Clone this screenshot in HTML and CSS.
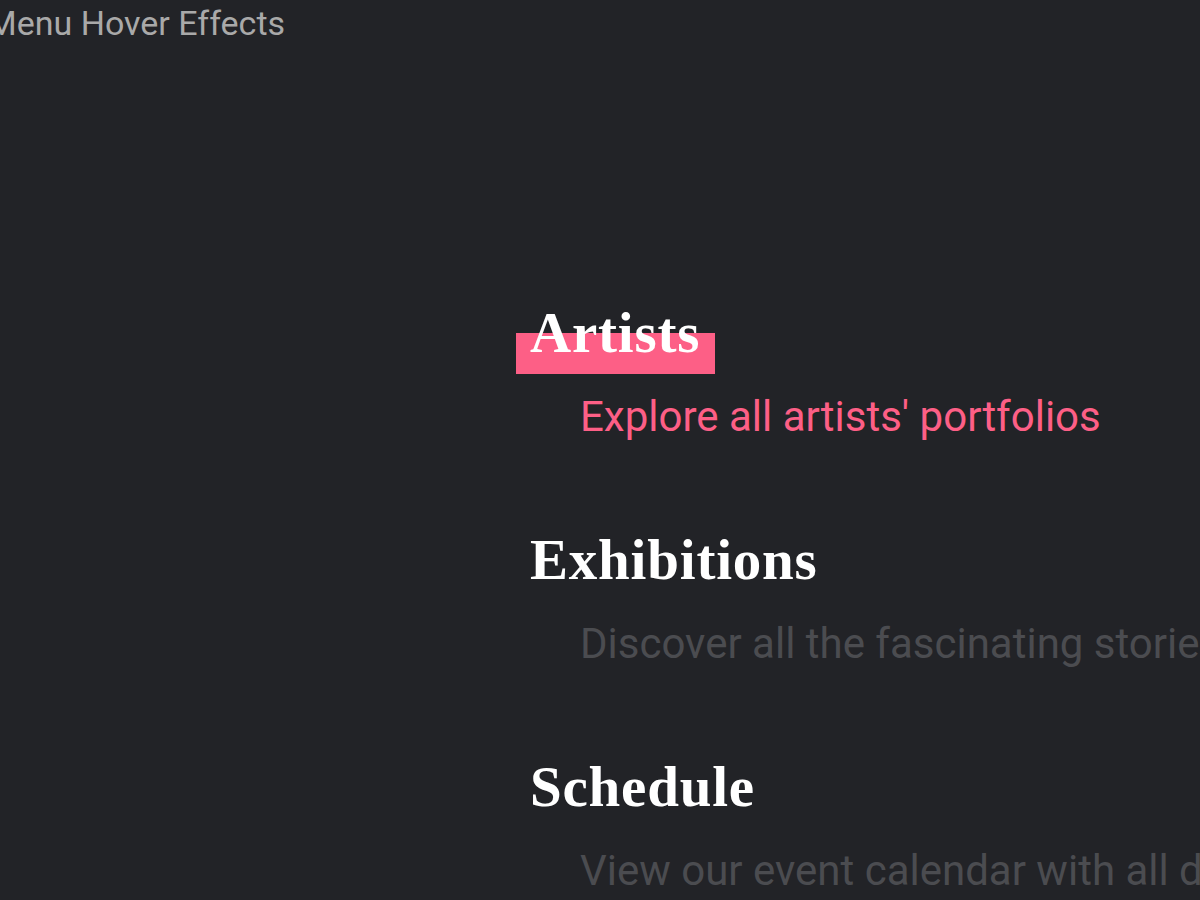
FILE: index.html
```html
<!DOCTYPE html>
<html>
<head>
<meta charset="utf-8">
<link rel="stylesheet" href="styles.css">
</head>
<body>
<header class="top"><h1 class="title">Menu Hover Effects</h1></header>
<nav class="menu">
  <a class="item active" href="#">
    <span class="item-title"><span class="label">Artists</span></span>
    <span class="item-sub">Explore all artists' portfolios</span>
  </a>
  <a class="item" href="#">
    <span class="item-title"><span class="label">Exhibitions</span></span>
    <span class="item-sub">Discover all the fascinating stories</span>
  </a>
  <a class="item" href="#">
    <span class="item-title"><span class="label">Schedule</span></span>
    <span class="item-sub">View our event calendar with all dates</span>
  </a>
</nav>
</body>
</html>
```
FILE: styles.css
```css
html, body {
  margin: 0;
  padding: 0;
  background: #222327;
  overflow: hidden;
  height: 900px;
}
body {
  font-family: Roboto, "Liberation Sans", sans-serif;
}
.title {
  margin: 0 0 0 -13px;
  font-weight: 400;
  font-size: 34px;
  line-height: 46px;
  color: #a9a9a9;
  white-space: nowrap;
}
.menu {
  display: flex;
  flex-direction: column;
  padding: 252px 0 0 530px;
}
.item {
  display: flex;
  flex-direction: column;
  text-decoration: none;
  white-space: nowrap;
  height: 227px;
}
.item-title {
  display: flex;
}
.label {
  position: relative;
  z-index: 0;
  font-family: "Liberation Serif", serif;
  font-weight: 700;
  font-size: 57px;
  line-height: 70px;
  color: #ffffff;
  letter-spacing: 0.8px;
}
.active .label::before {
  content: "";
  position: absolute;
  left: -14px;
  right: -15px;
  top: 35px;
  height: 41px;
  background: #fd5f86;
  z-index: -1;
}
.item-sub {
  margin: 24px 0 0 50px;
  font-size: 42px;
  line-height: 50px;
  color: #4b4c50;
}
.active .item-sub {
  color: #fd5f86;
}
```
